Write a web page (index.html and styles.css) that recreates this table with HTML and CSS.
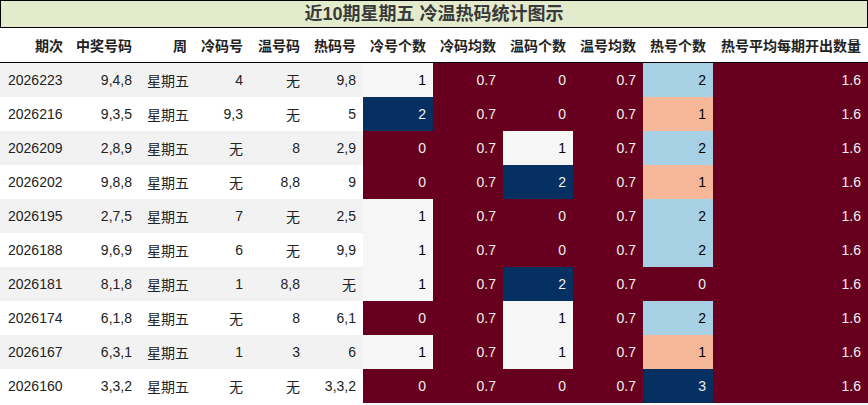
FILE: index.html
```html
<!DOCTYPE html>
<html>
<head>
<meta charset="utf-8">
<link rel="stylesheet" href="styles.css">
</head>
<body>
<div class="title">近10期星期五 冷温热码统计图示</div>
<table class="stats">
<colgroup>
<col class="c70"><col class="c69"><col class="c55"><col class="c56"><col class="c57"><col class="c56">
<col class="c70"><col class="c70"><col class="c70"><col class="c70"><col class="c70"><col class="c155">
</colgroup>
<thead>
<tr><th>期次</th><th>中奖号码</th><th>周</th><th>冷码号</th><th>温号码</th><th>热码号</th><th>冷号个数</th><th>冷码均数</th><th>温码个数</th><th>温号均数</th><th>热号个数</th><th>热号平均每期开出数量</th></tr>
</thead>
<tbody>
<tr><td class="l">2026223</td><td>9,4,8</td><td class="l">星期五</td><td>4</td><td>无</td><td>9,8</td><td class="mid">1</td><td class="red">0.7</td><td class="red">0</td><td class="red">0.7</td><td class="lb">2</td><td class="red">1.6</td></tr>
<tr><td class="l">2026216</td><td>9,3,5</td><td class="l">星期五</td><td>9,3</td><td>无</td><td>5</td><td class="navy">2</td><td class="red">0.7</td><td class="red">0</td><td class="red">0.7</td><td class="pe">1</td><td class="red">1.6</td></tr>
<tr><td class="l">2026209</td><td>2,8,9</td><td class="l">星期五</td><td>无</td><td>8</td><td>2,9</td><td class="red">0</td><td class="red">0.7</td><td class="mid">1</td><td class="red">0.7</td><td class="lb">2</td><td class="red">1.6</td></tr>
<tr><td class="l">2026202</td><td>9,8,8</td><td class="l">星期五</td><td>无</td><td>8,8</td><td>9</td><td class="red">0</td><td class="red">0.7</td><td class="navy">2</td><td class="red">0.7</td><td class="pe">1</td><td class="red">1.6</td></tr>
<tr><td class="l">2026195</td><td>2,7,5</td><td class="l">星期五</td><td>7</td><td>无</td><td>2,5</td><td class="mid">1</td><td class="red">0.7</td><td class="red">0</td><td class="red">0.7</td><td class="lb">2</td><td class="red">1.6</td></tr>
<tr><td class="l">2026188</td><td>9,6,9</td><td class="l">星期五</td><td>6</td><td>无</td><td>9,9</td><td class="mid">1</td><td class="red">0.7</td><td class="red">0</td><td class="red">0.7</td><td class="lb">2</td><td class="red">1.6</td></tr>
<tr><td class="l">2026181</td><td>8,1,8</td><td class="l">星期五</td><td>1</td><td>8,8</td><td>无</td><td class="mid">1</td><td class="red">0.7</td><td class="navy">2</td><td class="red">0.7</td><td class="red">0</td><td class="red">1.6</td></tr>
<tr><td class="l">2026174</td><td>6,1,8</td><td class="l">星期五</td><td>无</td><td>8</td><td>6,1</td><td class="red">0</td><td class="red">0.7</td><td class="mid">1</td><td class="red">0.7</td><td class="lb">2</td><td class="red">1.6</td></tr>
<tr><td class="l">2026167</td><td>6,3,1</td><td class="l">星期五</td><td>1</td><td>3</td><td>6</td><td class="mid">1</td><td class="red">0.7</td><td class="mid">1</td><td class="red">0.7</td><td class="pe">1</td><td class="red">1.6</td></tr>
<tr><td class="l">2026160</td><td>3,3,2</td><td class="l">星期五</td><td>无</td><td>无</td><td>3,3,2</td><td class="red">0</td><td class="red">0.7</td><td class="red">0</td><td class="red">0.7</td><td class="navy">3</td><td class="red">1.6</td></tr>
</tbody>
</table>
</body>
</html>
```
FILE: styles.css
```css
html, body {
  margin: 0;
  padding: 0;
  background: #ffffff;
  font-family: "Liberation Sans", "Noto Sans CJK SC", sans-serif;
}
.title {
  box-sizing: border-box;
  width: 868px;
  height: 28px;
  border: 1px solid #000;
  background: #e3ebcd;
  color: #3a3a3a;
  font-weight: bold;
  font-size: 18px;
  line-height: 26px;
  text-align: center;
}
.stats {
  width: 868px;
  table-layout: fixed;
  border-collapse: collapse;
  font-size: 14px;
  color: #222;
}
.c70 { width: 70px; }
.c69 { width: 69px; }
.c55 { width: 55px; }
.c56 { width: 56px; }
.c57 { width: 57px; }
.c155 { width: 155px; }
.stats th {
  height: 34px;
  padding: 0 7px 0 0;
  text-align: right;
  font-weight: bold;
  color: #222;
  border-bottom: 1px solid #000;
  white-space: nowrap;
}
.stats td {
  height: 34px;
  padding: 0 7px 0 0;
  text-align: right;
  white-space: nowrap;
}
.stats td.l {
  text-align: left;
  padding: 0 0 0 8px;
}
.stats tbody tr:nth-child(odd) { background: #f2f2f2; }
.stats tbody tr:nth-child(even) { background: #ffffff; }
.stats td.red { background: #67001f; color: #f1f1f1; }
.stats td.navy { background: #053061; color: #f1f1f1; }
.stats td.mid { background: #f6f6f6; color: #000; }
.stats td.lb { background: #a8d0e4; color: #000; }
.stats td.pe { background: #f6b799; color: #000; }
```
